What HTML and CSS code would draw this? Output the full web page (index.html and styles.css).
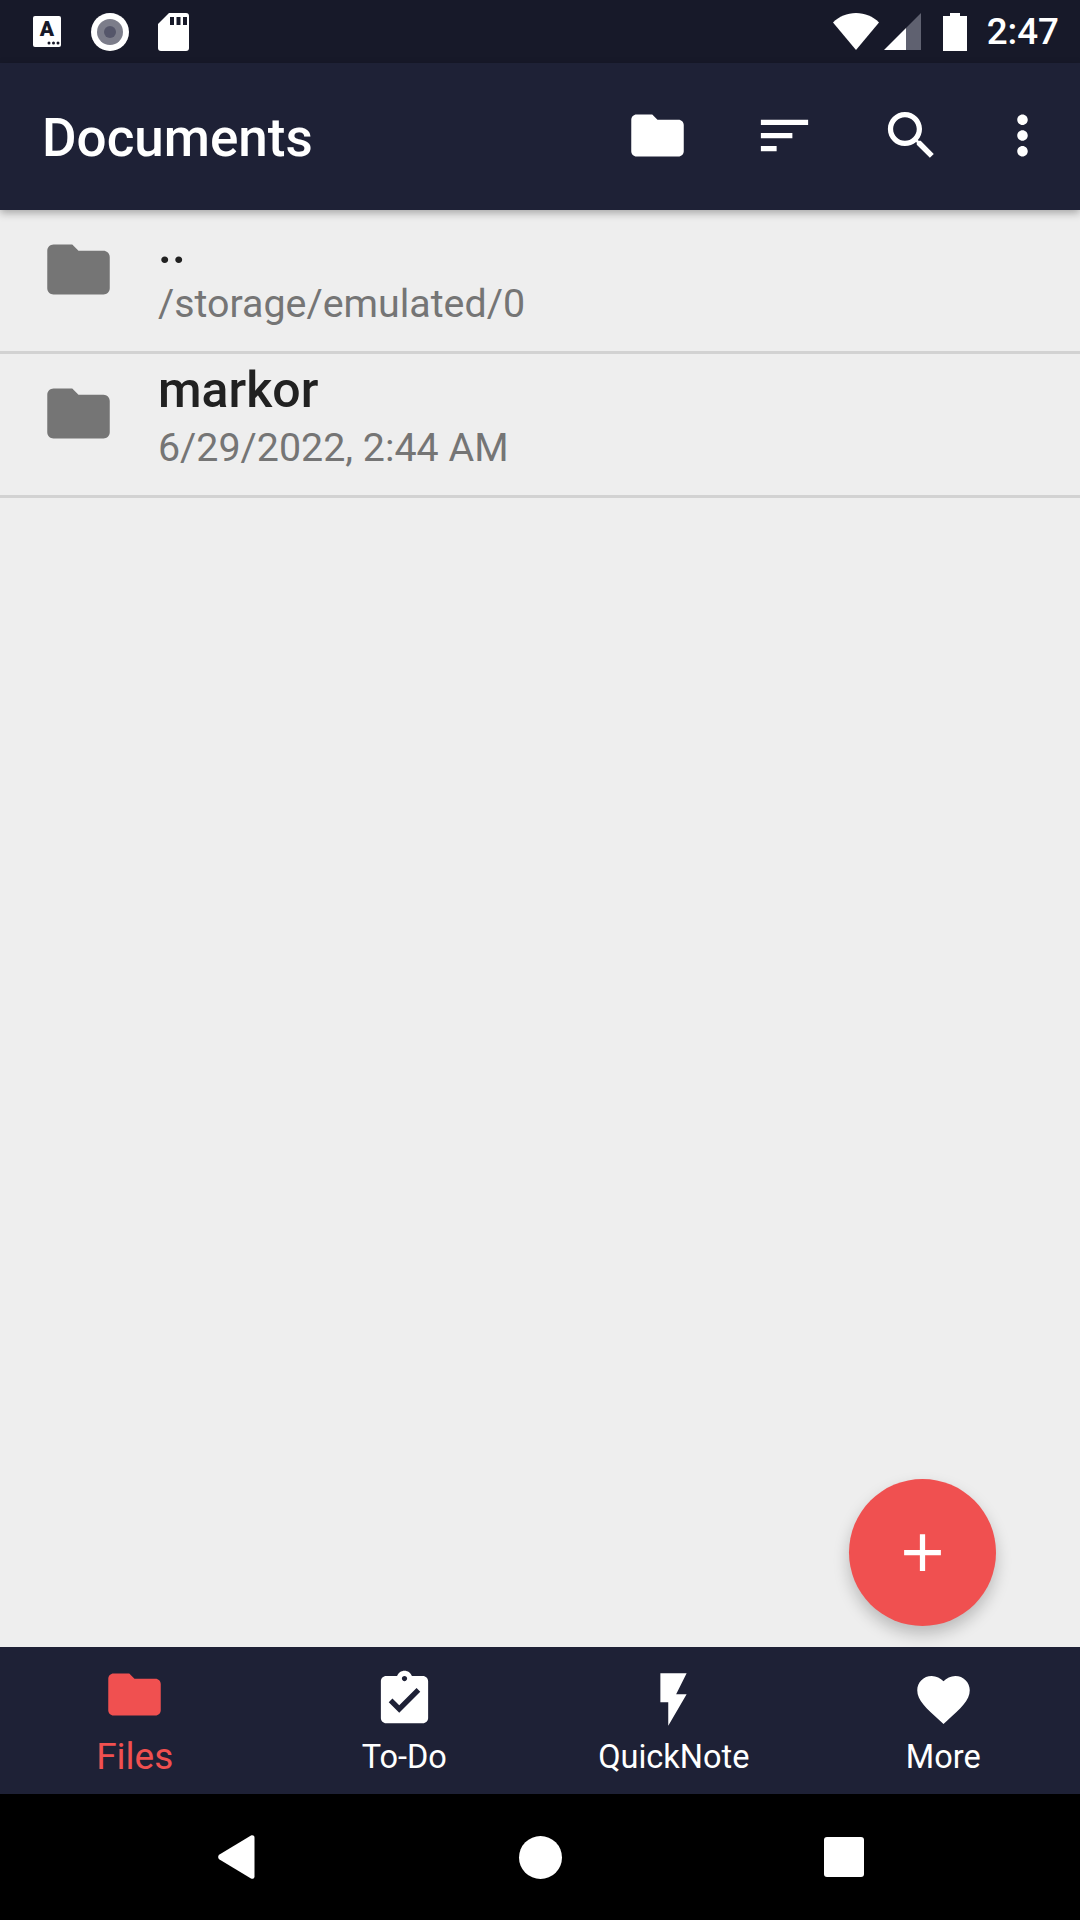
FILE: index.html
```html
<!DOCTYPE html>
<html lang="en">
<head>
    <meta charset="UTF-8">
    <meta name="viewport" content="width=device-width, initial-scale=1.0">
    <title>Documents</title>
    <link rel="stylesheet" href="styles.css">
</head>
<body>
    <div class="status-bar">
        <div class="status-left">
            <svg class="st-a" viewBox="0 0 28 31">
                <rect width="28" height="31" rx="2" fill="#fff"/>
                <text x="14" y="20" text-anchor="middle" class="st-a-letter">A</text>
                <circle cx="16" cy="27" r="1.5" fill="#171929"/>
                <circle cx="20.500" cy="27" r="1.5" fill="#171929"/>
                <circle cx="25" cy="27" r="1.5" fill="#171929"/>
            </svg>
            <svg class="st-rec" viewBox="0 0 38 38">
                <circle cx="19" cy="19" r="19" fill="#fff"/>
                <circle cx="19" cy="19" r="13" fill="#7c7d8a"/>
                <circle cx="19" cy="19" r="6" fill="#55566a"/>
            </svg>
            <svg class="st-sd" viewBox="0 0 31 38">
                <path d="M11 0H28a3 3 0 0 1 3 3V35a3 3 0 0 1-3 3H3a3 3 0 0 1-3-3V11z" fill="#fff"/>
                <rect x="12" y="4" width="4" height="8" fill="#171929"/>
                <rect x="18.500" y="4" width="4" height="8" fill="#171929"/>
                <rect x="25" y="4" width="4" height="8" fill="#171929"/>
            </svg>
        </div>
        <div class="status-right">
            <svg class="st-wifi" viewBox="0 0 46 37">
                <path d="M0 9.500C6 3.500 14 0 23 0s17 3.500 23 9.500L23 37z" fill="#fff"/>
            </svg>
            <svg class="st-signal" viewBox="0 0 37 37">
                <path d="M37 0V37H22V15z" fill="#5f6170"/>
                <path d="M22 15V37H0z" fill="#fff"/>
            </svg>
            <svg class="st-battery" viewBox="0 0 24 38">
                <path d="M7 0H17V3H24V38H0V3H7z" fill="#fff"/>
            </svg>
            <span class="st-time">2:47</span>
        </div>
    </div>

    <header class="toolbar">
        <h1 class="toolbar-title">Documents</h1>
        <div class="toolbar-actions">
            <button class="action" type="button">
                <svg class="icon" viewBox="0 0 24 24"><path d="M10 4H4c-1.100 0-1.990.900-1.990 2L2 18c0 1.100.900 2 2 2h16c1.100 0 2-.900 2-2V8c0-1.100-.900-2-2-2h-8l-2-2z"/></svg>
            </button>
            <button class="action" type="button">
                <svg class="icon" viewBox="0 0 24 24"><path d="M3 18h6v-2H3v2zM3 6v2h18V6H3zm0 7h12v-2H3v2z"/></svg>
            </button>
            <button class="action" type="button">
                <svg class="icon" viewBox="0 0 24 24"><path d="M15.500 14h-.79l-.28-.27C15.410 12.590 16 11.110 16 9.500 16 5.910 13.090 3 9.500 3S3 5.910 3 9.500 5.910 16 9.500 16c1.610 0 3.090-.59 4.230-1.570l.27.280v.790l5 4.990L20.490 19l-4.990-5zm-6 0C7.010 14 5 11.990 5 9.500S7.010 5 9.500 5 14 7.010 14 9.500 11.990 14 9.500 14z"/></svg>
            </button>
            <button class="action action-overflow" type="button">
                <svg class="icon" viewBox="0 0 24 24"><path d="M12 8c1.100 0 2-.900 2-2s-.900-2-2-2-2 .900-2 2 .900 2 2 2zm0 2c-1.100 0-2 .900-2 2s.900 2 2 2 2-.900 2-2-.900-2-2-2zm0 6c-1.100 0-2 .900-2 2s.900 2 2 2 2-.900 2-2-.900-2-2-2z"/></svg>
            </button>
        </div>
    </header>

    <main class="content">
        <ul class="file-list">
            <li class="file-row">
                <svg class="file-icon" viewBox="0 0 24 24"><path d="M10 4H4c-1.100 0-1.990.900-1.990 2L2 18c0 1.100.900 2 2 2h16c1.100 0 2-.900 2-2V8c0-1.100-.900-2-2-2h-8l-2-2z"/></svg>
                <div class="file-text">
                    <div class="file-name">..</div>
                    <div class="file-meta">/storage/emulated/0</div>
                </div>
            </li>
            <li class="file-row">
                <svg class="file-icon" viewBox="0 0 24 24"><path d="M10 4H4c-1.100 0-1.990.900-1.990 2L2 18c0 1.100.900 2 2 2h16c1.100 0 2-.900 2-2V8c0-1.100-.900-2-2-2h-8l-2-2z"/></svg>
                <div class="file-text">
                    <div class="file-name">markor</div>
                    <div class="file-meta">6/29/2022, 2:44 AM</div>
                </div>
            </li>
        </ul>
        <button class="fab" type="button">
            <svg class="fab-icon" viewBox="0 0 24 24"><path d="M19 13h-6v6h-2v-6H5v-2h6V5h2v6h6v2z"/></svg>
        </button>
    </main>

    <nav class="bottom-nav">
        <div class="tab tab-active">
            <svg class="icon" viewBox="0 0 24 24"><path d="M10 4H4c-1.100 0-1.990.900-1.990 2L2 18c0 1.100.900 2 2 2h16c1.100 0 2-.900 2-2V8c0-1.100-.900-2-2-2h-8l-2-2z"/></svg>
            <span class="tab-label">Files</span>
        </div>
        <div class="tab">
            <svg class="icon" viewBox="0 0 24 24"><path d="M19 3h-4.180C14.400 1.840 13.300 1 12 1c-1.300 0-2.400.840-2.820 2H5c-1.100 0-2 .900-2 2v14c0 1.100.900 2 2 2h14c1.100 0 2-.900 2-2V5c0-1.100-.900-2-2-2zm-7 0c.550 0 1 .450 1 1s-.450 1-1 1-1-.450-1-1 .450-1 1-1zm-2 14l-4-4 1.410-1.410L10 14.170l6.590-6.590L18 9l-8 8z"/></svg>
            <span class="tab-label">To-Do</span>
        </div>
        <div class="tab">
            <svg class="icon" viewBox="0 0 24 24"><path d="M7 2v11h3v9l7-12h-4l4-8z"/></svg>
            <span class="tab-label">QuickNote</span>
        </div>
        <div class="tab">
            <svg class="icon" viewBox="0 0 24 24"><path d="M12 21.350l-1.450-1.320C5.400 15.360 2 12.280 2 8.500 2 5.420 4.420 3 7.500 3c1.740 0 3.410.810 4.500 2.090C13.090 3.810 14.760 3 16.500 3 19.580 3 22 5.420 22 8.500c0 3.780-3.400 6.860-8.550 11.540L12 21.350z"/></svg>
            <span class="tab-label">More</span>
        </div>
    </nav>

    <div class="system-nav">
        <div class="sys-btn">
            <svg class="sys-back" viewBox="0 0 38 46"><path d="M2.500 20.500L34 1.500c1.500-.9 3.500 0 3.500 2V42.500c0 2-2 2.900-3.500 2L2.500 25.500c-1.800-1.100-1.800-3.900 0-5z" fill="#fff"/></svg>
        </div>
        <div class="sys-btn"><div class="sys-home"></div></div>
        <div class="sys-btn"><div class="sys-recent"></div></div>
    </div>
</body>
</html>
```

FILE: styles.css
```css
* {
    box-sizing: border-box;
}

body {
    margin: 0;
    width: 1080px;
    height: 1920px;
    display: flex;
    flex-direction: column;
    overflow: hidden;
    font-family: Roboto, "Liberation Sans", sans-serif;
    background-color: #eeeeee;
}

svg {
    display: block;
    flex: none;
}

/* status bar */
.status-bar {
    height: 63px;
    flex: none;
    display: flex;
    justify-content: space-between;
    align-items: center;
    padding: 0 21px 0 33px;
    background-color: #171929;
    color: white;
}

.status-left,
.status-right {
    display: flex;
    align-items: center;
}

.st-a {
    width: 28px;
    height: 31px;
}

.st-a-letter {
    font-family: Roboto, sans-serif;
    font-size: 21px;
    font-weight: 900;
    fill: #171929;
}

.st-rec {
    width: 38px;
    height: 38px;
    margin-left: 30px;
}

.st-sd {
    width: 31px;
    height: 38px;
    margin-left: 29px;
}

.st-wifi {
    width: 46px;
    height: 37px;
}

.st-signal {
    width: 37px;
    height: 37px;
    margin-left: 5px;
}

.st-battery {
    width: 24px;
    height: 38px;
    margin-left: 22px;
}

.st-time {
    margin-left: 20px;
    font-size: 36.750px;
    font-weight: 500;
    line-height: 43px;
}

/* toolbar */
.toolbar {
    height: 147px;
    flex: none;
    display: flex;
    justify-content: space-between;
    align-items: center;
    padding: 0 11px 0 42px;
    background-color: #1e2136;
    color: white;
    position: relative;
    z-index: 2;
    box-shadow: 0 3px 8px rgba(0, 0, 0, 0.3);
}

.toolbar-title {
    margin: 0;
    padding-top: 2px;
    font-size: 53px;
    font-weight: 500;
}

.toolbar-actions {
    display: flex;
    align-items: center;
}

.action {
    width: 127px;
    height: 126px;
    padding: 0;
    border: none;
    background: none;
    display: flex;
    justify-content: center;
    align-items: center;
    margin-bottom: 3px;
}

.action-overflow {
    width: 94px;
}

.icon {
    width: 63px;
    height: 63px;
    fill: white;
}

/* file list */
.content {
    flex: 1;
    position: relative;
}

.file-list {
    list-style: none;
    margin: 0;
    padding: 0;
}

.file-row {
    height: 144px;
    display: flex;
    align-items: flex-start;
    padding-left: 41px;
    border-bottom: 3px solid #d2d2d2;
}

.file-icon {
    width: 75px;
    height: 75px;
    margin-top: 22px;
    fill: #757575;
}

.file-text {
    margin-left: 42px;
    padding-top: 6px;
}

.file-name {
    font-size: 50px;
    font-weight: 500;
    line-height: 60px;
    color: #212121;
}

.file-meta {
    font-size: 39.375px;
    line-height: 56px;
    color: #757575;
}

.fab {
    position: absolute;
    right: 84px;
    bottom: 21px;
    width: 147px;
    height: 147px;
    padding: 0;
    border: none;
    border-radius: 50%;
    background-color: #f05050;
    display: flex;
    justify-content: center;
    align-items: center;
    box-shadow: 0 8px 16px rgba(0, 0, 0, 0.22);
}

.fab-icon {
    width: 63px;
    height: 63px;
    fill: white;
}

/* bottom tabs */
.bottom-nav {
    height: 147px;
    flex: none;
    display: grid;
    grid-template-columns: repeat(4, 1fr);
    padding-right: 2px;
    background-color: #1e2136;
    color: white;
}

.tab {
    display: flex;
    flex-direction: column;
    align-items: center;
    padding-top: 21px;
}

.tab-label {
    font-size: 32.500px;
    line-height: 42px;
    margin-top: 5px;
}

.tab-active {
    padding-top: 16px;
}

.tab-active .icon {
    fill: #f05050;
}

.tab-active .tab-label {
    color: #f05050;
    font-size: 37px;
    margin-top: 10px;
}

/* android nav bar */
.system-nav {
    height: 126px;
    flex: none;
    display: flex;
    justify-content: center;
    background-color: black;
}

.sys-btn {
    width: 304px;
    display: flex;
    justify-content: center;
    align-items: center;
}

.sys-back {
    width: 38px;
    height: 46px;
}

.sys-home {
    width: 43px;
    height: 43px;
    border-radius: 50%;
    background-color: white;
}

.sys-recent {
    width: 40px;
    height: 40px;
    border-radius: 3px;
    background-color: white;
}
```
